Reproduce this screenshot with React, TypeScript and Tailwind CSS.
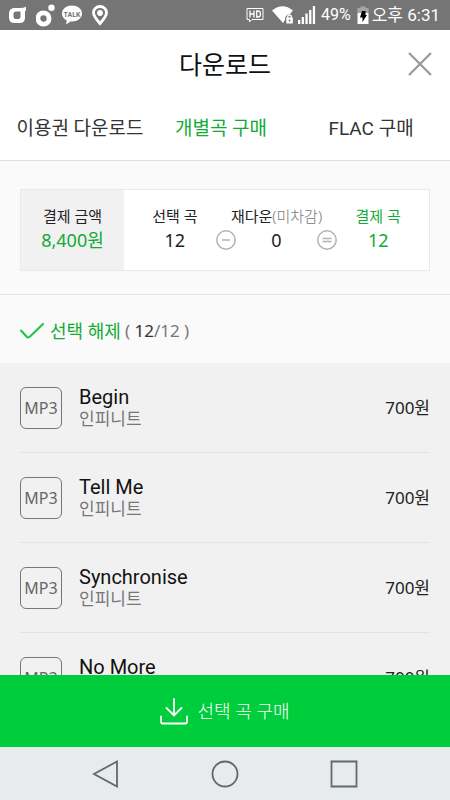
import { useState } from "react";

const roboto = "font-[Roboto,'Noto_Sans_CJK_KR',sans-serif]";
const noto = "font-['Noto_Sans','Noto_Sans_CJK_KR',sans-serif]";

const tracks = [
  { title: "Begin", artist: "인피니트", price: "700원" },
  { title: "Tell Me", artist: "인피니트", price: "700원" },
  { title: "Synchronise", artist: "인피니트", price: "700원" },
  { title: "No More", artist: "인피니트", price: "700원" },
];

function StatusBar() {
  return (
    <div className="flex h-[30px] shrink-0 items-center justify-between bg-[#757575] pl-[9px] pr-[10px] text-white">
      <div className="flex items-center gap-[10px]">
        <svg width="17" height="18" viewBox="0 0 17 18" aria-hidden="true">
          <path
            fillRule="evenodd"
            fill="currentColor"
            d="M6 2 H11 Q15 2 17 0.800 V3.500 Q17 4.800 16 5.300 V11.500 Q16 17 10.500 17 H5.500 Q0 17 0 11.500 V7.500 Q0 2 6 2 Z M7 5.500 Q4.500 5.500 4.500 8 V10.500 Q4.500 13 7 13 H9 Q11.500 13 11.500 10.500 V5.500 Z"
          />
        </svg>
        <svg width="19" height="23" viewBox="0 0 19 23" aria-hidden="true">
          <circle cx="7.500" cy="14.500" r="5.600" fill="none" stroke="currentColor" strokeWidth="4.800" />
          <circle cx="15.500" cy="3.800" r="3.200" fill="currentColor" />
        </svg>
        <svg width="20" height="20" viewBox="0 0 20 20" aria-hidden="true" className="-ml-[3px]">
          <path
            fill="currentColor"
            d="M10 0.500 C15.500 0.500 20 4 20 8.500 C20 13 15.500 16.500 10 16.500 H8.500 L4 19.500 L4.800 15.500 C1.800 14 0 11.500 0 8.500 C0 4 4.500 0.500 10 0.500 Z"
          />
          <text x="10" y="11.500" textAnchor="middle" fontSize="7" fontWeight="700" fontFamily="Roboto, sans-serif" fill="#757575">
            TALK
          </text>
        </svg>
        <svg width="16" height="21" viewBox="0 0 16 21" aria-hidden="true">
          <path
            fill="none"
            stroke="currentColor"
            strokeWidth="2.800"
            d="M8 18.500 C5 15 1.500 11.500 1.500 7.800 A6.500 6.300 0 0 1 14.500 7.800 C14.500 11.500 11 15 8 18.500 Z"
          />
          <circle cx="8" cy="8" r="2.900" fill="currentColor" />
        </svg>
      </div>
      <div className={`flex items-center ${roboto}`}>
        <svg width="18" height="16" viewBox="0 0 18 16" aria-hidden="true" className="mr-2">
          <path d="M1 1.500 H17 V12.500 H6 L3.500 15 V12.500 H1 Z" fill="none" stroke="currentColor" strokeWidth="1" />
          <path d="M4 3.500 V10.500 M4 7 H8 M8 3.500 V10.500 M10.700 4 V10 H12 Q14.500 10 14.500 7 Q14.500 4 12 4 Z" fill="none" stroke="currentColor" strokeWidth="1.300" />
        </svg>
        <svg width="22" height="18" viewBox="0 0 22 18" aria-hidden="true" className="mr-1">
          <path d="M0 4.500 Q10.500 -4 21 4.500 L18 8 Q13 8.500 13 14 L11 17 Z" fill="currentColor" />
          <path d="M15.700 12 V11 Q15.700 9 17.500 9 Q19.300 9 19.300 11 V12" fill="none" stroke="currentColor" strokeWidth="1.300" />
          <path fillRule="evenodd" d="M14.300 11.500 H20.800 V17.500 H14.300 Z M16.800 13.500 V15.500 H18.300 V13.500 Z" fill="currentColor" />
        </svg>
        <svg width="18" height="18" viewBox="0 0 18 18" aria-hidden="true" className="mr-[5px]">
          <path d="M0 14 H2.300 V18 H0 Z M3.700 11 H6 V18 H3.700 Z M7.400 7.500 H9.700 V18 H7.400 Z M11.100 4 H13.400 V18 H11.100 Z M14.800 0 H17.100 V18 H14.800 Z" fill="currentColor" />
        </svg>
        <span className="mr-[6px] text-base leading-6">49%</span>
        <svg width="12" height="18" viewBox="0 0 12 18" aria-hidden="true" className="mr-[3px]">
          <path d="M0.500 7 H11.500 V18 H0.500 Z" fill="currentColor" />
          <path d="M0.500 2 H3.500 V0.500 H8.500 V2 H11.500 V7 H0.500 Z" fill="#a5a5a5" />
          <path d="M5 5 H8.500 V9 H10 L5.500 16 V11.500 H3 Z" fill="#000" />
        </svg>
        <span className="text-[17px] leading-6">오후 6:31</span>
      </div>
    </div>
  );
}

function Operator({ equal }: { equal?: boolean }) {
  return (
    <div className="flex w-0 justify-center pt-6">
      <svg width="20" height="20" viewBox="0 0 20 20" fill="none" stroke="#b3b3b3" strokeWidth="1.500" className="shrink-0" aria-hidden="true">
        <circle cx="10" cy="10" r="9.200" />
        <path d={equal ? "M5.500 8.500 H14.500 M5.500 11.500 H14.500" : "M6 10 H14"} />
      </svg>
    </div>
  );
}

function Summary() {
  return (
    <section className="border-b border-[#e6e6e6] px-5 pt-7 pb-[23px]">
      <div className="flex items-center border border-[#e9e9e9] bg-white text-center text-[15px] leading-6 text-[#222]">
        <div className="w-[103px] bg-[#f1f1f1] pt-[14px] pb-[18px]">
          <div>결제 금액</div>
          <div className="text-lg leading-6 text-[#12ab35]">8,400원</div>
        </div>
        <div className="flex flex-1 items-center pb-1">
          <div className="flex-1">
            <div>선택 곡</div>
            <div className="text-lg leading-6">12</div>
          </div>
          <Operator />
          <div className="flex-1">
            <div className="whitespace-nowrap">
              재다운<span className="font-light text-[#777]">(미차감)</span>
            </div>
            <div className="text-lg leading-6">0</div>
          </div>
          <Operator equal />
          <div className="flex-1 text-[#12ab35]">
            <div>결제 곡</div>
            <div className="text-lg leading-6">12</div>
          </div>
        </div>
      </div>
    </section>
  );
}

export default function App() {
  const [tab, setTab] = useState(1);
  const tabClass = (i: number) => (tab === i ? "text-[#12ab35]" : "text-[#333]");
  return (
    <div className={`flex h-screen flex-col overflow-hidden bg-white ${noto}`}>
      <StatusBar />
      <header className="grid h-[68px] shrink-0 grid-cols-[1fr_auto_1fr] items-center px-4">
        <h1 className="col-start-2 text-[25px] leading-8 text-[#111]">다운로드</h1>
        <button type="button" aria-label="닫기" className="justify-self-end text-[#999]">
          <svg width="28" height="28" viewBox="0 0 28 28" fill="none" stroke="currentColor" strokeWidth="2.200" className="block">
            <path d="M3 3 L25 25 M25 3 L3 25" />
          </svg>
        </button>
      </header>
      <nav className={`grid h-[63px] shrink-0 grid-cols-[160fr_122fr_168fr] border-b border-[#dedede] text-[19px] leading-6 ${roboto}`}>
        <button type="button" onClick={() => setTab(0)} className={tabClass(0)}>
          이용권 다운로드
        </button>
        <button type="button" onClick={() => setTab(1)} className={tabClass(1)}>
          개별곡 구매
        </button>
        <button type="button" onClick={() => setTab(2)} className={`pl-[10px] ${tabClass(2)}`}>
          FLAC 구매
        </button>
      </nav>
      <main className="flex min-h-0 flex-1 flex-col bg-[#fafafa]">
        <Summary />
        <div className="flex h-[68px] shrink-0 items-center px-5 pt-1">
          <button type="button" className="flex items-center gap-[6px] text-lg leading-6 text-[#12ab35]">
            <svg width="24" height="17" viewBox="0 0 24 17" fill="none" stroke="#1fc24b" strokeWidth="2" strokeLinecap="round" aria-hidden="true">
              <path d="M1 7.500 L6.500 13.500 Q8 15.300 10 13.500 L23 1" />
            </svg>
            선택 해제
          </button>
          <span className="ml-1 text-[17px] leading-6 text-[#777]">
            ( <span className="text-[#333]">12</span>/12 )
          </span>
        </div>
        <ul className="min-h-0 flex-1 overflow-hidden bg-[#f1f1f1] px-5">
          {tracks.map((t) => (
            <li key={t.title} className="flex h-[90px] items-center border-b border-[#e4e4e4]">
              <span className="flex size-[42px] items-center justify-center rounded-md border border-[#777] text-base text-[#666]">MP3</span>
              <div className="ml-[17px] flex-1">
                <div className={`text-xl leading-[22px] text-[#111] ${roboto}`}>{t.title}</div>
                <div className="text-[17px] leading-[22px] text-[#777]">{t.artist}</div>
              </div>
              <span className="text-[17px] leading-6 text-[#222]">{t.price}</span>
            </li>
          ))}
        </ul>
      </main>
      <button type="button" className="flex h-[72px] shrink-0 items-center justify-center gap-[9px] bg-[#00cd3c] text-lg leading-6 font-light text-white">
        <svg width="28" height="27" viewBox="0 0 28 27" fill="none" stroke="currentColor" strokeWidth="1.800" strokeLinecap="round" aria-hidden="true">
          <path d="M14 1 V17 M6.500 10 L14 17.500 L21.500 10 M1 18.500 V24 Q1 25.500 2.500 25.500 H25.500 Q27 25.500 27 24 V18.500" />
        </svg>
        선택 곡 구매
      </button>
      <footer className="grid h-[53px] shrink-0 grid-cols-3 items-center justify-items-center bg-[#e7ebec] px-[46px] text-[#5f696e]">
        <button type="button" aria-label="뒤로">
          <svg width="28" height="28" viewBox="0 0 28 28" fill="none" stroke="currentColor" strokeWidth="1.800">
            <path d="M25 1.500 V26.500 L2 14 Z" />
          </svg>
        </button>
        <button type="button" aria-label="홈">
          <svg width="28" height="28" viewBox="0 0 28 28" fill="none" stroke="currentColor" strokeWidth="1.800">
            <circle cx="14" cy="14" r="12.500" />
          </svg>
        </button>
        <button type="button" aria-label="최근 앱">
          <svg width="28" height="28" viewBox="0 0 28 28" fill="none" stroke="currentColor" strokeWidth="1.800">
            <path d="M1.500 1.500 H26.500 V26.500 H1.500 Z" />
          </svg>
        </button>
      </footer>
    </div>
  );
}
